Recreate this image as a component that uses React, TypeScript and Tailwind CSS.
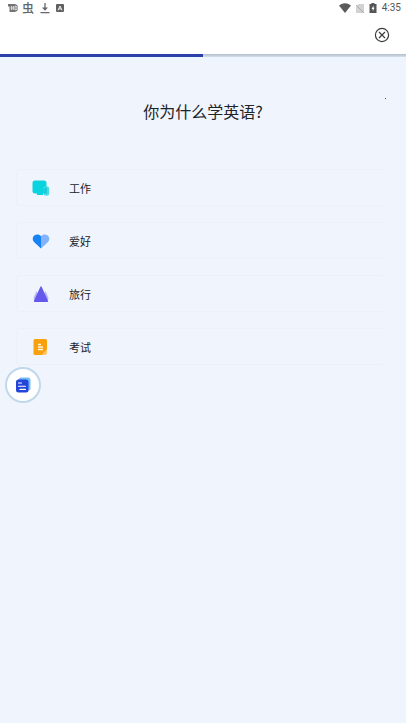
import React, { useState } from "react";

type ReasonType = {
  id: string;
  label: string;
  icon: React.ReactNode;
};

const WorkIcon = () => (
  <svg width="18" height="18" viewBox="0 0 18 18" aria-hidden="true">
    <rect x="0.5" y="1.5" width="14" height="13" rx="2.5" fill="#08d3df" />
    <path d="M5 14h6v2H5z" fill="#08d3df" />
    <rect x="11.5" y="7.5" width="5.5" height="9" rx="1.5" fill="#43dce8" />
    <path d="M11.5 10v4.5H15V8z" fill="#20c9d8" />
  </svg>
);

const HobbyIcon = () => (
  <svg width="18" height="18" viewBox="0 0 18 18" aria-hidden="true">
    <path
      d="M9 4.2C7.3 1.9 4.2 1.9 2.2 3.6C.2 5.4.3 8.3 2 10.1L9 16.5z"
      fill="#1683f5"
    />
    <path
      d="M9 4.2c1.7-2.3 4.8-2.3 6.8-.6c2 1.8 1.9 4.7.2 6.5L9 16.5z"
      fill="#82b3fc"
    />
  </svg>
);

const TravelIcon = () => (
  <svg width="18" height="18" viewBox="0 0 18 18" aria-hidden="true">
    <path d="M4.5 6L1.5 13L3 17h6zM13.5 6l3 7l-1.5 4H9z" fill="#b9b6fb" />
    <path
      d="M8.4 1.7q.6-1 1.2 0L16 15.8q.3 1.2-.8 1.2H2.8q-1.1 0-.8-1.2z"
      fill="#6458ed"
    />
  </svg>
);

const ExamIcon = () => (
  <svg width="18" height="18" viewBox="0 0 18 18" aria-hidden="true">
    <path
      d="M3 1h10.500a1.500 1.500 0 0 1 1.500 1.500V12L10 17H3a1.500 1.500 0 0 1-1.500-1.500v-13A1.500 1.500 0 0 1 3 1z"
      fill="#f8a10c"
    />
    <path d="M15 11v3.500A2.500 2.500 0 0 1 12.500 17h-3z" fill="#fdc766" />
    <path d="M6 6.500h3M6 9h5M6 11.500h5" stroke="#fff3d6" strokeWidth="1.4" />
  </svg>
);

const reasons: ReasonType[] = [
  { id: "work", label: "工作", icon: <WorkIcon /> },
  { id: "hobby", label: "爱好", icon: <HobbyIcon /> },
  { id: "travel", label: "旅行", icon: <TravelIcon /> },
  { id: "exam", label: "考试", icon: <ExamIcon /> },
];

const StatusBar = () => (
  <div className="flex h-4 items-center justify-between pl-2 pr-[5px] text-[#666666]">
    <div className="flex items-center gap-1">
      <svg width="10" height="10" viewBox="0 0 10 10" aria-hidden="true">
        <path d="M0 1h6a4 4 0 0 1 0 8H1.500V3.500H0z" fill="#737373" />
        <path
          d="M3.300 3v4M5.300 3v4M3.300 5h2M7 3.200h.4a1.800 1.800 0 0 1 0 3.600H7z"
          stroke="#fff"
          strokeWidth=".8"
          fill="none"
        />
      </svg>
      <span className="text-xs leading-4 font-medium">虫</span>
      <svg
        className="ml-px"
        width="12"
        height="12"
        viewBox="0 0 12 12"
        fill="none"
        stroke="currentColor"
        aria-hidden="true"
      >
        <path d="M6 1v6M1.500 10.700h9" strokeWidth="1.300" />
        <path d="M3 5.500h6L6 8.800z" fill="currentColor" stroke="none" />
      </svg>
      <svg className="ml-px" width="8" height="8" viewBox="0 0 8 8" aria-hidden="true">
        <rect width="8" height="8" rx="1" fill="#606060" />
        <path
          d="M2 6.300L4 2l2 4.300M2.800 4.900h2.400"
          stroke="#fff"
          strokeWidth=".9"
          fill="none"
        />
      </svg>
    </div>
    <div className="flex items-center gap-[5px]">
      <svg width="12" height="10" viewBox="0 0 12 10" aria-hidden="true">
        <path d="M0 2.400Q6-1.800 12 2.400L6 10z" fill="#5a5a5a" />
      </svg>
      <svg width="8" height="9" viewBox="0 0 8 9" aria-hidden="true">
        <path d="M2.500 0H8v9H0V2.500z" fill="#d2d2d2" />
        <path d="M0 1l8 8" stroke="#a5a5a5" strokeWidth=".9" />
      </svg>
      <svg width="8" height="10" viewBox="0 0 8 10" aria-hidden="true">
        <path d="M2.500 0h3v1H7.500v9h-7V1h2z" fill="#555" />
        <path d="M4.500 2.500L2.500 6h1.300v2.200L5.600 4.800H4.500z" fill="#fff" />
      </svg>
      <span className="font-['Roboto',sans-serif] text-[10px] leading-4 text-[#555555]">
        4:35
      </span>
    </div>
  </div>
);

const App = () => {
  const [selected, setSelected] = useState("");

  return (
    <div className="relative flex min-h-screen flex-col bg-[#f0f4fc] font-['Noto_Sans_CJK_SC',sans-serif] text-[#202328]">
      <header className="bg-white">
        <StatusBar />
        <div className="flex h-[38px] items-center justify-end pr-4">
          <button aria-label="关闭" className="cursor-pointer">
            <svg
              width="16"
              height="16"
              viewBox="0 0 16 16"
              fill="none"
              stroke="#3b3b3b"
              strokeWidth="1.2"
              aria-hidden="true"
            >
              <circle cx="8" cy="8" r="6.6" />
              <path d="M5 5l6 6M11 5l-6 6" />
            </svg>
          </button>
        </div>
      </header>
      <div className="flex h-[3px] bg-linear-to-b from-[#b4bdca] to-[#d5e0ec]">
        <div className="w-1/2 bg-[#2b41a9]" />
      </div>
      <div className="h-1 bg-[#edf5fe]" />

      <main className="px-4 pt-[38px]">
        <h1 className="text-center text-base leading-6">你为什么学英语?</h1>
        <div className="mt-[46px] mr-1 flex flex-col gap-4">
          {reasons.map((reason) => (
            <button
              key={reason.id}
              className={`flex h-[37px] w-full cursor-pointer items-center rounded-sm border border-r-0 border-[#edf0f5] px-[15px] text-left ${
                selected === reason.id ? "bg-blue-100" : "bg-[#f0f4fc]"
              }`}
              onClick={() => setSelected(reason.id)}
            >
              {reason.icon}
              <span className="ml-[19px] text-[11px] leading-4">
                {reason.label}
              </span>
            </button>
          ))}
        </div>
      </main>

      <span className="absolute top-[98px] right-5 size-px bg-[#555555]" />

      <button
        aria-label="笔记"
        className="absolute top-[367px] left-[5px] flex size-9 cursor-pointer items-center justify-center rounded-full border-2 border-[#c0d8ec] bg-white"
      >
        <svg width="16" height="16" viewBox="0 0 16 16" aria-hidden="true">
          <rect x="3.5" y="0.5" width="12" height="13" rx="2.5" fill="#72bdf8" />
          <rect x="1" y="2.5" width="12.5" height="13" rx="2.5" fill="#2446d8" />
          <path
            d="M3.500 6h3M3.500 9.200h7M5 12.400h5.500"
            stroke="#fff"
            strokeWidth="1.1"
            strokeLinecap="round"
          />
        </svg>
      </button>
    </div>
  );
};

export default App;
